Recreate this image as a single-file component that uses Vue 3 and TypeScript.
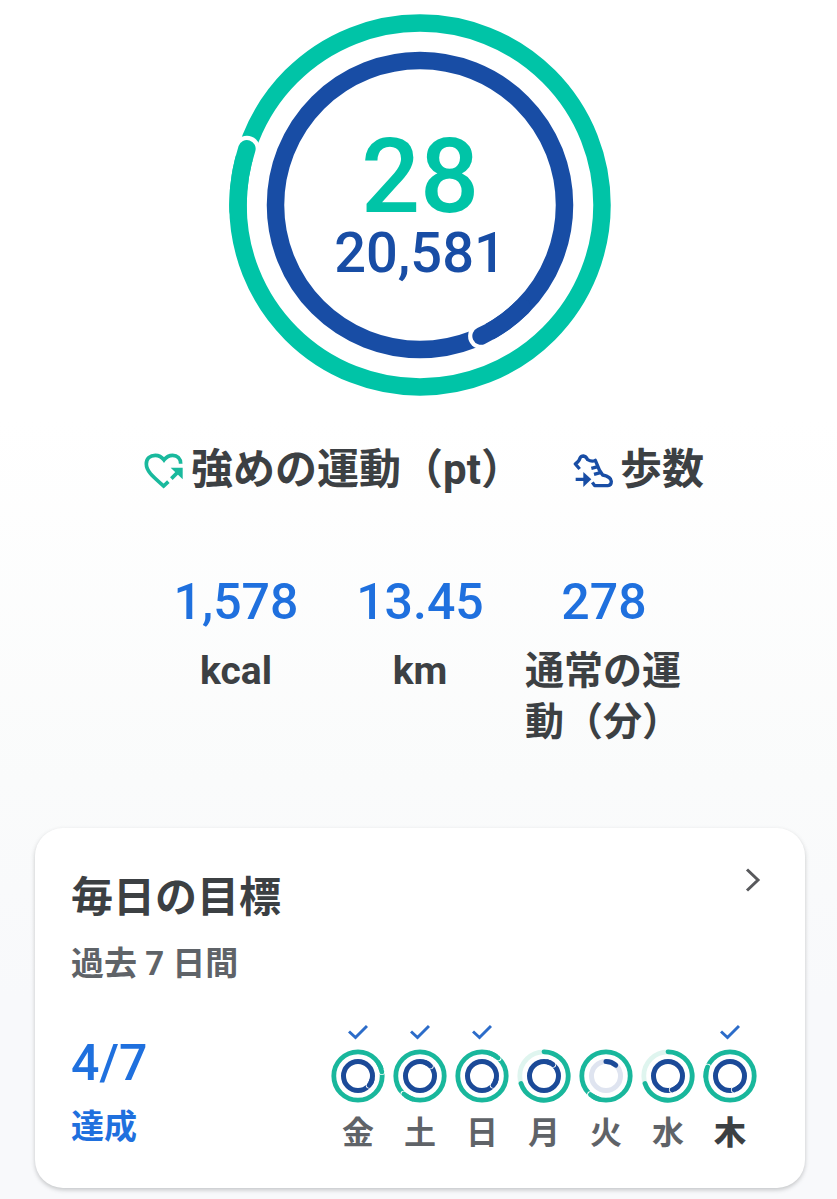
<script setup lang="ts">
interface Ring {
  radius: number
  width: number
  color: string
  track: string
  angle: number
  complete: boolean
}

interface Day {
  label: string
  outer: number
  outerDone: boolean
  inner: number
  innerDone: boolean
  achieved: boolean
}

const bigRings: Ring[] = [
  { radius: 182, width: 17.5, color: '#00c4a7', track: '#dff5ef', angle: 288, complete: true },
  { radius: 144.5, width: 17.5, color: '#184da5', track: '#dfe4f0', angle: 155, complete: true },
]

const stats = [
  { value: '1,578', label: 'kcal' },
  { value: '13.45', label: 'km' },
  { value: '278', label: '通常の運動（分）' },
]

const days: Day[] = [
  { label: '金', outer: 80, outerDone: true, inner: 130, innerDone: true, achieved: true },
  { label: '土', outer: 222, outerDone: true, inner: 46, innerDone: true, achieved: true },
  { label: '日', outer: 42, outerDone: true, inner: 130, innerDone: true, achieved: true },
  { label: '月', outer: 252, outerDone: false, inner: 38, innerDone: true, achieved: false },
  { label: '火', outer: 220, outerDone: true, inner: 42, innerDone: false, achieved: false },
  { label: '水', outer: 252, outerDone: false, inner: 163, innerDone: true, achieved: false },
  { label: '木', outer: 292, outerDone: true, inner: 163, innerDone: true, achieved: true },
]

function dayRings(day: Day): Ring[] {
  return [
    { radius: 24.2, width: 4.8, color: '#19b79c', track: '#dff5ef', angle: day.outer, complete: day.outerDone },
    { radius: 14.5, width: 5, color: '#1b4a98', track: '#dfe4f0', angle: day.inner, complete: day.innerDone },
  ]
}

function point(radius: number, angle: number) {
  const rad = (angle * Math.PI) / 180
  return { x: radius * Math.sin(rad), y: -radius * Math.cos(rad) }
}

// Clockwise arc, angles in degrees from twelve o'clock.
function arc(radius: number, from: number, to: number): string {
  const a = point(radius, from)
  const b = point(radius, to)
  const large = to - from > 180 ? 1 : 0
  return `M${a.x} ${a.y}A${radius} ${radius} 0 ${large} 1 ${b.x} ${b.y}`
}
</script>

<template>
  <main class="page">
    <section class="hero">
      <svg class="rings" viewBox="-191 -191 382 382" aria-hidden="true">
        <g v-for="ring in bigRings" :key="ring.radius" fill="none" :stroke-width="ring.width">
          <circle :r="ring.radius" :stroke="ring.color" />
          <circle
            :cx="point(ring.radius, ring.angle).x"
            :cy="point(ring.radius, ring.angle).y"
            r="13"
            fill="#fff"
            stroke="none"
          />
          <path :d="arc(ring.radius, ring.angle - 20, ring.angle)" :stroke="ring.color" stroke-linecap="round" />
        </g>
      </svg>
      <div class="totals">
        <p class="points">28</p>
        <p class="steps">20,581</p>
      </div>
    </section>

    <ul class="legend">
      <li>
        <svg class="icon" viewBox="39 60 120 114" fill="none" aria-hidden="true">
          <path
            d="M149 98C149 82 139 73 125 73C114 73 105 79 99 87C93 79 84 73 73 73C57 73 46 83 46 99C46 121 66 137 98 165L112 152"
            stroke="#19b99d"
            stroke-width="11"
          />
          <path d="M121 143L142 122" stroke="#19b99d" stroke-width="11" />
          <path d="M119 110H155V145Z" fill="#19b99d" />
        </svg>
        <span>強めの運動（pt）</span>
      </li>
      <li>
        <svg class="icon" viewBox="493 60 120 114" fill="none" aria-hidden="true">
          <path
            d="M513 114L500 99Q512 91 514 81Q517 75 524 75Q532 76 537 86Q550 94 560 88L572 117L582 132Q607 137 608 151Q608 164 598 164H558L551 154"
            stroke="#184da5"
            stroke-width="10"
            stroke-linejoin="round"
          />
          <path d="M548 112L568 107M556 130L578 124M501 145H530" stroke="#184da5" stroke-width="10" />
          <path d="M524 123L548 145L524 168Z" fill="#184da5" />
        </svg>
        <span>歩数</span>
      </li>
    </ul>

    <dl class="stats">
      <div v-for="stat in stats" :key="stat.label" class="stat">
        <dt>{{ stat.label }}</dt>
        <dd>{{ stat.value }}</dd>
      </div>
    </dl>

    <section class="card">
      <header class="card-head">
        <div>
          <h2>毎日の目標</h2>
          <p class="period">過去 7 日間</p>
        </div>
        <button class="more" type="button" aria-label="毎日の目標">
          <svg viewBox="0 0 16 24" fill="none" aria-hidden="true">
            <path d="M2 1.5L13 12L2 22.5" stroke="#58595c" stroke-width="3" />
          </svg>
        </button>
      </header>
      <div class="card-body">
        <div class="score">
          <p class="ratio">4/7</p>
          <p class="achieved">達成</p>
        </div>
        <ol class="days">
          <li v-for="(day, i) in days" :key="day.label" :class="{ today: i === days.length - 1 }">
            <svg class="check" viewBox="0 0 20 16" fill="none" aria-hidden="true">
              <path v-if="day.achieved" d="M1 7.5L7.5 13.5L19 2" stroke="#2c6cc9" stroke-width="3" />
            </svg>
            <svg class="mini" viewBox="-27 -27 54 54" aria-hidden="true">
              <g v-for="ring in dayRings(day)" :key="ring.radius" fill="none" :stroke-width="ring.width">
                <circle :r="ring.radius" :stroke="ring.complete ? ring.color : ring.track" />
                <template v-if="ring.complete">
                  <circle
                    :cx="point(ring.radius, ring.angle).x"
                    :cy="point(ring.radius, ring.angle).y"
                    r="3.3"
                    fill="#fff"
                    stroke="none"
                  />
                  <path :d="arc(ring.radius, ring.angle - 24, ring.angle)" :stroke="ring.color" stroke-linecap="round" />
                </template>
                <path v-else :d="arc(ring.radius, 0, ring.angle)" :stroke="ring.color" stroke-linecap="round" />
              </g>
            </svg>
            <span>{{ day.label }}</span>
          </li>
        </ol>
      </div>
    </section>
  </main>
</template>

<style>
body {
  margin: 0;
  background: #f8f9fb;
}
</style>

<style scoped>
.page {
  box-sizing: border-box;
  min-height: 100vh;
  padding: 14px 32px 11px 35px;
  background: linear-gradient(#fff 0, #fff 420px, #fafbfb 780px, #f8f9fb 1000px);
  color: #3c4043;
  font-family: Roboto, "Noto Sans CJK JP", sans-serif;
  font-weight: 700;
}

p,
h2,
ul,
ol,
dl,
dd {
  margin: 0;
  padding: 0;
}

ul,
ol {
  list-style: none;
}

.hero {
  display: grid;
  place-items: center;
}

.hero > * {
  grid-area: 1 / 1;
}

.rings {
  display: block;
  width: 382px;
}

.totals {
  padding-top: 8px;
  text-align: center;
  font-weight: 500;
}

.points {
  color: #00c4a7;
  font-size: 104px;
  line-height: 88px;
}

.steps {
  color: #184da5;
  font-size: 56px;
  line-height: 64px;
}

.legend {
  display: flex;
  justify-content: center;
  gap: 50px;
  margin-top: 44px;
  padding-left: 8px;
  font-size: 42px;
  line-height: 60px;
}

.legend li {
  display: flex;
  align-items: center;
  gap: 7px;
}

.icon {
  width: 40px;
  height: 38px;
}

.stats {
  display: flex;
  justify-content: center;
  margin-top: 70px;
}

.stat {
  display: flex;
  flex-direction: column-reverse;
  justify-content: flex-end;
  align-items: center;
  gap: 12px;
  width: 158px;
  padding: 0 13px;
}

.stat dt {
  font-size: 39px;
  line-height: 51px;
}

.stat dd {
  color: #1f70de;
  font-size: 50px;
  font-weight: 500;
  line-height: 64px;
}

.card {
  margin-top: 80px;
  padding: 36px 36px 33px;
  border-radius: 28px;
  background: #fff;
  box-shadow: 0 2px 4px rgba(60, 64, 67, 0.28);
}

.card-head {
  display: flex;
  justify-content: space-between;
  align-items: flex-start;
}

h2 {
  font-size: 42px;
  font-weight: 700;
  line-height: 68px;
}

.period {
  margin-top: 8px;
  color: #5f6368;
  font-size: 33px;
  line-height: 48px;
}

.more {
  display: flex;
  margin: 0;
  padding: 4px 8px;
  border: 0;
  background: none;
}

.more svg {
  width: 16px;
  height: 24px;
}

.card-body {
  display: flex;
  justify-content: space-between;
  align-items: flex-start;
  margin-top: 36px;
}

.score {
  color: #1f70de;
}

.ratio {
  margin-top: 7px;
  font-size: 50px;
  font-weight: 500;
  line-height: 64px;
}

.achieved {
  margin-top: 8px;
  font-size: 33px;
  line-height: 48px;
}

.days {
  display: grid;
  grid-template-columns: repeat(7, 62px);
  margin-right: 8px;
  color: #5f6368;
  font-size: 32px;
  line-height: 44px;
}

.days li {
  display: flex;
  flex-direction: column;
  align-items: center;
}

.check {
  width: 20px;
  height: 16px;
}

.mini {
  width: 54px;
  height: 54px;
  margin: 9px 0 8px;
}

.today {
  color: #3c4043;
  font-weight: 900;
}
</style>
